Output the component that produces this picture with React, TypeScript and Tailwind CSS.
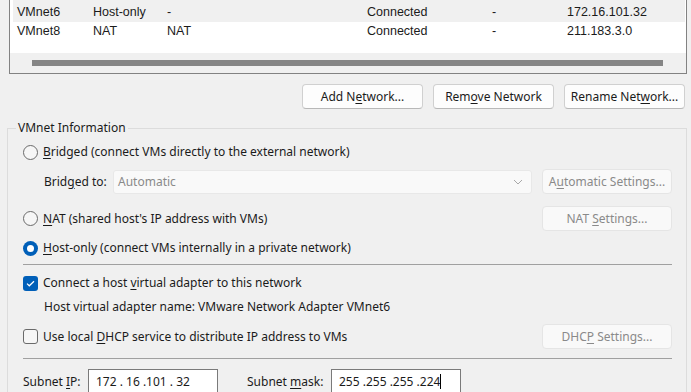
import React from 'react';

const ui = { fontFamily: '"Noto Sans", "Open Sans", sans-serif' };
const listFont = { fontFamily: '"Liberation Sans", Arial, sans-serif' };

// underlined access-key letter
const U: React.FC<{ c: string }> = ({ c }) => <span className="underline underline-offset-2">{c}</span>;

const Btn: React.FC<{ children: React.ReactNode; disabled?: boolean; className?: string }> = ({ children, disabled, className }) => (
  <div
    className={
      'flex items-center justify-center rounded-[4px] border h-[25px] text-[12px] ' +
      (disabled
        ? 'bg-[#f9f9f9] border-[#e5e5e5] text-[#8a8a8a] '
        : 'bg-[#fdfdfd] border-[#d0d0d0] border-b-[#b8b8b8] text-[#1b1b1b] ') +
      (className || '')
    }
  >
    <span className="whitespace-pre">{children}</span>
  </div>
);

const Radio: React.FC<{ checked?: boolean }> = ({ checked }) =>
  checked ? (
    <div className="w-[15px] h-[15px] rounded-full bg-[#005fb8] flex items-center justify-center shrink-0">
      <div className="w-[7px] h-[7px] rounded-full bg-white" />
    </div>
  ) : (
    <div className="w-[15px] h-[15px] rounded-full border border-[#6a6a6a] bg-[#f6f6f6] shrink-0" />
  );

const Check: React.FC<{ checked?: boolean }> = ({ checked }) =>
  checked ? (
    <div className="w-[15px] h-[15px] rounded-[3px] bg-[#005fb8] flex items-center justify-center shrink-0">
      <svg width="9" height="7" viewBox="0 0 9 7" fill="none">
        <path d="M1 3.6 L3.3 5.8 L8 1.2" stroke="white" strokeWidth="1.2" />
      </svg>
    </div>
  ) : (
    <div className="w-[15px] h-[15px] rounded-[3px] border border-[#6a6a6a] bg-[#f6f6f6] shrink-0" />
  );

const rows = [
  { name: 'VMnet6', type: 'Host-only', ext: '-', status: 'Connected', dhcp: '-', subnet: '172.16.101.32', sel: true },
  { name: 'VMnet8', type: 'NAT', ext: 'NAT', status: 'Connected', dhcp: '-', subnet: '211.183.3.0', sel: false },
];

export default function App() {
  return (
    <div className="w-[691px] h-[392px] overflow-hidden bg-[#f0f0f0] text-[12px] text-[#1b1b1b]" style={ui}>
      {/* network list (top cut off) */}
      <div className="ml-[9px] w-[678px] h-[74px] bg-white border border-t-0 border-[#828282] flex flex-col text-[12.5px]" style={listFont}>
        <div className="h-[3px] ml-[3px] mr-[1px] bg-[#f0f0f0]" />
        {rows.map((r) => (
          <div key={r.name} className={'flex items-center h-[19px] ml-[3px] mr-[1px] ' + (r.sel ? 'bg-[#f0f0f0]' : 'bg-white')}>
            <span className="w-[80px] pl-[4px]">{r.name}</span>
            <span className="w-[74px]">{r.type}</span>
            <span className="w-[200px]">{r.ext}</span>
            <span className="w-[125px]">{r.status}</span>
            <span className="w-[75px]">{r.dhcp}</span>
            <span>{r.subnet}</span>
          </div>
        ))}
        <div className="h-[12px]" />
        <div className="h-[20px] bg-[#f0f0f0] flex items-center">
          <div className="ml-[22px] w-[631px] h-[6px] bg-[#858585]" />
        </div>
      </div>

      {/* buttons */}
      <div className="flex justify-end gap-[10px] mt-[10px] mr-[6px]">
        <Btn className="w-[121px]">Add N<U c="e" />twork...</Btn>
        <Btn className="w-[121px]">Rem<U c="o" />ve Network</Btn>
        <Btn className="w-[121px]">Rename Net<U c="w" />ork...</Btn>
      </div>

      {/* VMnet Information */}
      <fieldset className="ml-[7px] w-[680px] mt-[11px] border border-[#dcdcdc] pl-[15px] pr-[14px] h-[300px]">
        <legend className="-ml-[7px] px-[2px] leading-[16px]">VMnet Information</legend>

        <div className="flex items-center h-[20px] mt-[6px] gap-[5px]">
          <Radio />
          <span><U c="B" />ridged (connect VMs directly to the external network)</span>
        </div>

        <div className="flex items-center h-[25px] mt-[7px]">
          <span className="w-[69px] pl-[21px] shrink-0 whitespace-nowrap">Brid<U c="g" />ed to:</span>
          <div className="w-[419px] h-[24px] ml-[21px] bg-[#f9f9f9] border border-[#e8e8e8] rounded-[3px] flex items-center justify-between px-[4px] text-[#8a8a8a]">
            <span>Automatic</span>
            <svg width="10" height="6" viewBox="0 0 10 6" fill="none" className="mr-[4px]">
              <path d="M1 1 L5 5 L9 1" stroke="#a8a8a8" strokeWidth="1" />
            </svg>
          </div>
          <div className="flex-1" />
          <Btn disabled className="w-[130px]">A<U c="u" />tomatic Settings...</Btn>
        </div>

        <div className="flex items-center h-[25px] mt-[12px] gap-[5px]">
          <Radio />
          <span><U c="N" />AT (shared host's IP address with VMs)</span>
          <div className="flex-1" />
          <Btn disabled className="w-[130px]">NAT <U c="S" />ettings...</Btn>
        </div>

        <div className="flex items-center h-[20px] mt-[7px] gap-[5px]">
          <Radio checked />
          <span><U c="H" />ost-only (connect VMs internally in a private network)</span>
        </div>

        <div className="h-px bg-[#a0a0a0] mt-[6px]" />

        <div className="flex items-center h-[20px] mt-[8px] gap-[5px]">
          <Check checked />
          <span>Connect a host <U c="v" />irtual adapter to this network</span>
        </div>

        <div className="flex items-center h-[20px] mt-[4px] pl-[21px]">
          Host virtual adapter name: VMware Network Adapter VMnet6
        </div>

        <div className="flex items-center h-[25px] mt-[7px] gap-[5px]">
          <Check />
          <span>Use local <U c="D" />HCP service to distribute IP address to VMs</span>
          <div className="flex-1" />
          <Btn disabled className="w-[130px]">DHC<U c="P" /> Settings...</Btn>
        </div>

        <div className="h-px bg-[#a0a0a0] mt-[9px]" />

        <div className="flex items-center h-[25px] mt-[10px]">
          <span className="w-[65px] shrink-0">Subnet <U c="I" />P:</span>
          <div className="w-[130px] h-[25px] bg-white border border-[#7a7a7a] flex items-center pl-[7px] whitespace-pre">172 . 16 .101 . 32</div>
          <span className="ml-[29px] w-[84px] shrink-0">Subnet <U c="m" />ask:</span>
          <div className="w-[130px] h-[25px] bg-white border border-[#7a7a7a] flex items-center pl-[7px] whitespace-pre">
            255 .255 .255 .224<span className="inline-block w-px h-[15px] bg-black" />
          </div>
        </div>
      </fieldset>
    </div>
  );
}
